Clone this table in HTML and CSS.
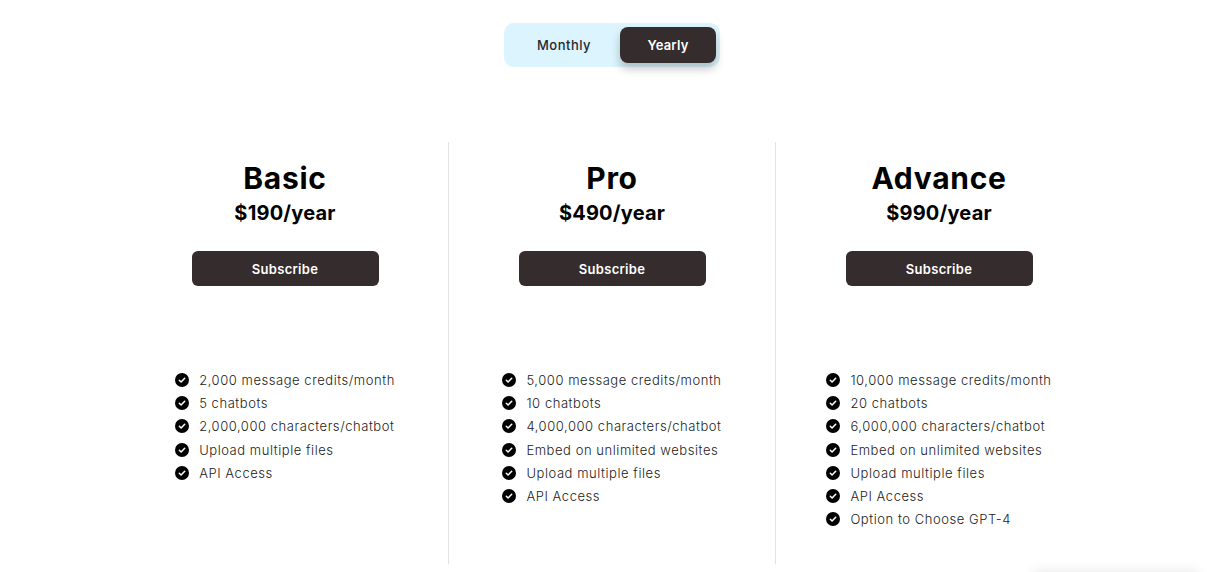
FILE: index.html
```html
<!DOCTYPE html>
<html lang="en">
<head>
<meta charset="utf-8">
<title>Pricing</title>
<link rel="stylesheet" href="styles.css">
</head>
<body>
<div class="page">
  <div class="toggle">
    <button class="toggle-btn">Monthly</button>
    <button class="toggle-btn active">Yearly</button>
  </div>

  <div class="plans">
    <section class="plan">
      <h2 class="plan-name">Basic</h2>
      <div class="plan-price">$190/year</div>
      <button class="subscribe">Subscribe</button>
      <ul class="features">
        <li><span class="check"><svg viewBox="0 0 14 14"><circle cx="7" cy="7" r="7"/><path d="M4.3 7.2l1.8 1.8 3.6-3.8"/></svg></span>2,000 message credits/month</li>
        <li><span class="check"><svg viewBox="0 0 14 14"><circle cx="7" cy="7" r="7"/><path d="M4.3 7.2l1.8 1.8 3.6-3.8"/></svg></span>5 chatbots</li>
        <li><span class="check"><svg viewBox="0 0 14 14"><circle cx="7" cy="7" r="7"/><path d="M4.3 7.2l1.8 1.8 3.6-3.8"/></svg></span>2,000,000 characters/chatbot</li>
        <li><span class="check"><svg viewBox="0 0 14 14"><circle cx="7" cy="7" r="7"/><path d="M4.3 7.2l1.8 1.8 3.6-3.8"/></svg></span>Upload multiple files</li>
        <li><span class="check"><svg viewBox="0 0 14 14"><circle cx="7" cy="7" r="7"/><path d="M4.3 7.2l1.8 1.8 3.6-3.8"/></svg></span>API Access</li>
      </ul>
    </section>
    <section class="plan">
      <h2 class="plan-name">Pro</h2>
      <div class="plan-price">$490/year</div>
      <button class="subscribe">Subscribe</button>
      <ul class="features">
        <li><span class="check"><svg viewBox="0 0 14 14"><circle cx="7" cy="7" r="7"/><path d="M4.3 7.2l1.8 1.8 3.6-3.8"/></svg></span>5,000 message credits/month</li>
        <li><span class="check"><svg viewBox="0 0 14 14"><circle cx="7" cy="7" r="7"/><path d="M4.3 7.2l1.8 1.8 3.6-3.8"/></svg></span>10 chatbots</li>
        <li><span class="check"><svg viewBox="0 0 14 14"><circle cx="7" cy="7" r="7"/><path d="M4.3 7.2l1.8 1.8 3.6-3.8"/></svg></span>4,000,000 characters/chatbot</li>
        <li><span class="check"><svg viewBox="0 0 14 14"><circle cx="7" cy="7" r="7"/><path d="M4.3 7.2l1.8 1.8 3.6-3.8"/></svg></span>Embed on unlimited websites</li>
        <li><span class="check"><svg viewBox="0 0 14 14"><circle cx="7" cy="7" r="7"/><path d="M4.3 7.2l1.8 1.8 3.6-3.8"/></svg></span>Upload multiple files</li>
        <li><span class="check"><svg viewBox="0 0 14 14"><circle cx="7" cy="7" r="7"/><path d="M4.3 7.2l1.8 1.8 3.6-3.8"/></svg></span>API Access</li>
      </ul>
    </section>
    <section class="plan">
      <h2 class="plan-name">Advance</h2>
      <div class="plan-price">$990/year</div>
      <button class="subscribe">Subscribe</button>
      <ul class="features">
        <li><span class="check"><svg viewBox="0 0 14 14"><circle cx="7" cy="7" r="7"/><path d="M4.3 7.2l1.8 1.8 3.6-3.8"/></svg></span>10,000 message credits/month</li>
        <li><span class="check"><svg viewBox="0 0 14 14"><circle cx="7" cy="7" r="7"/><path d="M4.3 7.2l1.8 1.8 3.6-3.8"/></svg></span>20 chatbots</li>
        <li><span class="check"><svg viewBox="0 0 14 14"><circle cx="7" cy="7" r="7"/><path d="M4.3 7.2l1.8 1.8 3.6-3.8"/></svg></span>6,000,000 characters/chatbot</li>
        <li><span class="check"><svg viewBox="0 0 14 14"><circle cx="7" cy="7" r="7"/><path d="M4.3 7.2l1.8 1.8 3.6-3.8"/></svg></span>Embed on unlimited websites</li>
        <li><span class="check"><svg viewBox="0 0 14 14"><circle cx="7" cy="7" r="7"/><path d="M4.3 7.2l1.8 1.8 3.6-3.8"/></svg></span>Upload multiple files</li>
        <li><span class="check"><svg viewBox="0 0 14 14"><circle cx="7" cy="7" r="7"/><path d="M4.3 7.2l1.8 1.8 3.6-3.8"/></svg></span>API Access</li>
        <li><span class="check"><svg viewBox="0 0 14 14"><circle cx="7" cy="7" r="7"/><path d="M4.3 7.2l1.8 1.8 3.6-3.8"/></svg></span>Option to Choose GPT-4</li>
      </ul>
    </section>
  </div>
  <div class="widget-shadow"></div>
</div>
</body>
</html>
```

FILE: styles.css
```css
* { box-sizing: border-box; }
html, body { margin: 0; padding: 0; background: #fff; }
body {
  font-family: Inter, "Open Sans", "DejaVu Sans", sans-serif;
  color: #000;
  overflow: hidden;
  height: 572px;
}
.page {
  position: relative;
  height: 572px;
  padding-top: 23px;
  overflow: hidden;
}
.toggle {
  display: flex;
  width: 216px;
  height: 44px;
  margin: 0 auto;
  padding: 4px;
  background: #dcf4fd;
  border-radius: 10px;
}
.toggle-btn {
  flex: 1;
  border: 0;
  background: transparent;
  font-family: inherit;
  font-size: 13px;
  font-weight: 500;
  letter-spacing: 0.5px;
  color: #1f2933;
  border-radius: 8px;
  padding: 0;
  cursor: pointer;
}
.toggle-btn.active {
  flex: 0 0 96px;
  background: #352c2e;
  color: #fff;
  font-weight: 600;
  letter-spacing: 0.2px;
  box-shadow: 0 6px 10px rgba(0,0,0,0.22);
}
.plans {
  display: flex;
  width: 980px;
  margin: 75px auto 0;
}
.plan {
  flex: 1;
  display: flex;
  flex-direction: column;
  align-items: center;
  padding: 18px 0 33px;
}
.plan + .plan { border-left: 1px solid #e3e3e3; }
.plan-name {
  margin: 0;
  font-size: 30px;
  line-height: 36px;
  font-weight: 700;
  letter-spacing: 0.7px;
}
.plan-price {
  margin-top: 5px;
  font-size: 20px;
  line-height: 24px;
  font-weight: 700;
  letter-spacing: 0.2px;
}
.subscribe {
  margin-top: 26px;
  width: 187px;
  height: 35px;
  border: 0;
  border-radius: 6px;
  background: #352c2e;
  color: #fff;
  font-family: inherit;
  font-size: 13px;
  font-weight: 600;
  letter-spacing: 0.3px;
  cursor: pointer;
}
.features {
  list-style: none;
  margin: 82px 0 0;
  padding: 0;
}
.features li {
  display: flex;
  align-items: center;
  height: 23.3px;
  font-size: 13px;
  font-weight: 300;
  letter-spacing: 0.55px;
  color: #222;
}
.check {
  display: inline-flex;
  width: 14px;
  height: 14px;
  margin-right: 10px;
}
.check svg { width: 14px; height: 14px; }
.check circle { fill: #000; }
.check path { fill: none; stroke: #fff; stroke-width: 1.5; stroke-linecap: round; stroke-linejoin: round; }
.widget-shadow {
  position: absolute;
  left: 1030px;
  top: 574px;
  width: 170px;
  height: 40px;
  border-radius: 8px;
  box-shadow: 0 -4px 12px rgba(0,0,0,0.08);
}
```
